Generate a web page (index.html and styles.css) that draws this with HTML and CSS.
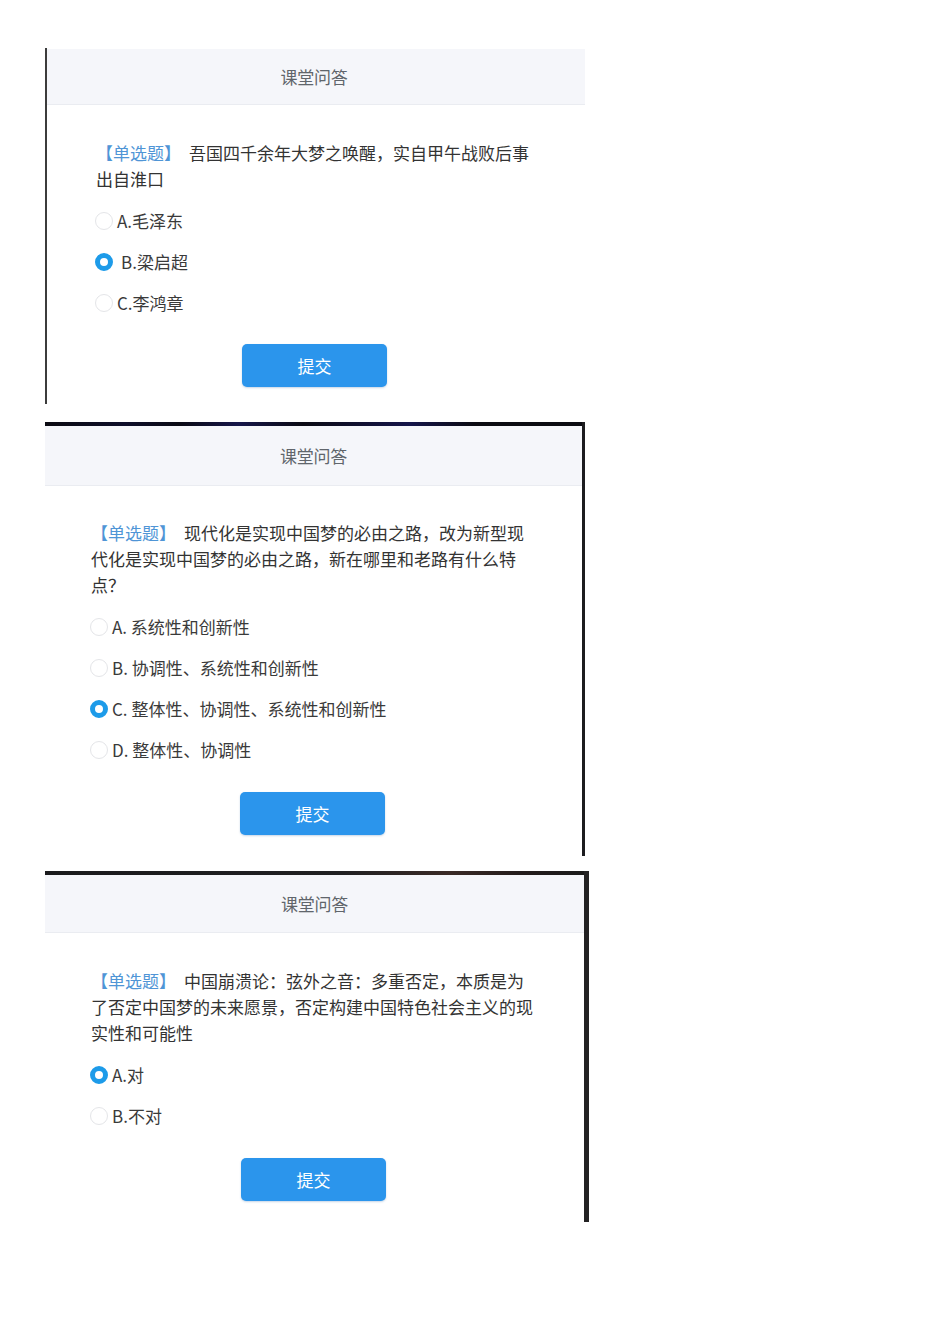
FILE: index.html
```html
<!DOCTYPE html>
<html lang="zh-CN">
<head>
<meta charset="utf-8">
<title>课堂问答</title>
<link rel="stylesheet" href="styles.css">
</head>
<body>
<div class="page">

  <section class="panel panel-first">
    <div class="header header-first">课堂问答</div>
    <div class="body body-first">
      <div class="question">
        <div class="q-line"><span class="tag">【单选题】</span><span class="q-text">吾国四千余年大梦之唤醒，实自甲午战败后事</span></div>
        <div class="q-line">出自淮口</div>
      </div>
      <ul class="options">
        <li class="option"><span class="radio"></span><span class="opt-text">A.毛泽东</span></li>
        <li class="option"><span class="radio checked"></span><span class="opt-text opt-wide">B.梁启超</span></li>
        <li class="option"><span class="radio"></span><span class="opt-text">C.李鸿章</span></li>
      </ul>
      <div class="actions"><button class="submit">提交</button></div>
    </div>
  </section>

  <section class="panel panel-second">
    <div class="topbar topbar-blue"></div>
    <div class="header header-second">课堂问答</div>
    <div class="body body-second">
      <div class="question">
        <div class="q-line"><span class="tag">【单选题】</span><span class="q-text">现代化是实现中国梦的必由之路，改为新型现</span></div>
        <div class="q-line">代化是实现中国梦的必由之路，新在哪里和老路有什么特</div>
        <div class="q-line">点？</div>
      </div>
      <ul class="options">
        <li class="option"><span class="radio"></span><span class="opt-text">A. 系统性和创新性</span></li>
        <li class="option"><span class="radio"></span><span class="opt-text">B. 协调性、系统性和创新性</span></li>
        <li class="option"><span class="radio checked"></span><span class="opt-text">C. 整体性、协调性、系统性和创新性</span></li>
        <li class="option"><span class="radio"></span><span class="opt-text">D. 整体性、协调性</span></li>
      </ul>
      <div class="actions"><button class="submit">提交</button></div>
    </div>
  </section>

  <section class="panel panel-third">
    <div class="topbar topbar-brown"></div>
    <div class="header header-third">课堂问答</div>
    <div class="body body-third">
      <div class="question">
        <div class="q-line"><span class="tag">【单选题】</span><span class="q-text">中国崩溃论：弦外之音：多重否定，本质是为</span></div>
        <div class="q-line">了否定中国梦的未来愿景，否定构建中国特色社会主义的现</div>
        <div class="q-line">实性和可能性</div>
      </div>
      <ul class="options">
        <li class="option"><span class="radio checked"></span><span class="opt-text">A.对</span></li>
        <li class="option"><span class="radio"></span><span class="opt-text">B.不对</span></li>
      </ul>
      <div class="actions"><button class="submit">提交</button></div>
    </div>
  </section>

</div>
</body>
</html>
```

FILE: styles.css
```css
* {
  box-sizing: border-box;
}

html, body {
  margin: 0;
  padding: 0;
  background: #ffffff;
}

body {
  font-family: "Noto Sans CJK SC", "Noto Sans", "Liberation Sans", sans-serif;
  color: #333333;
}

.page {
  padding-top: 48px;
  display: flex;
  flex-direction: column;
  align-items: flex-start;
}

.panel {
  margin-left: 45px;
  background: #ffffff;
  overflow: hidden;
}

.panel-first {
  width: 540px;
  height: 356px;
  border-left: 2px solid #3c3c3c;
}

.panel-second {
  width: 540px;
  margin-top: 18px;
  border-right: 3px solid #1c1c1f;
}

.panel-third {
  width: 544px;
  margin-top: 15px;
  border-right: 5px solid #232223;
}

.topbar {
  height: 4px;
}

.topbar-blue {
  background: linear-gradient(90deg, #0b0b12 0%, #0e0e2a 15%, #0a0a14 25%, #16164a 36%, #0b0b14 48%, #15154a 68%, #0b0b12 80%, #0b0b12 100%);
}

.topbar-brown {
  background: linear-gradient(90deg, #1a1a1c 0%, #202022 55%, #3a2a26 75%, #241c1c 88%, #1a1a1a 100%);
}

.header {
  display: flex;
  align-items: center;
  justify-content: center;
  background: #f5f6fa;
  border-bottom: 1px solid #eaecf1;
  font-size: 17px;
  color: #60656b;
  letter-spacing: -0.2px;
}

.header-first {
  height: 56px;
  margin-top: 1px;
  padding-right: 4px;
}

.header-second {
  height: 60px;
}

.header-third {
  height: 58px;
}

.body {
  padding-right: 48px;
}

.body-first {
  padding-left: 49px;
  padding-right: 52px;
  padding-top: 35px;
  padding-bottom: 17px;
}

.body-second {
  padding-left: 46px;
  padding-top: 34px;
  padding-bottom: 21px;
}

.body-third {
  padding-left: 46px;
  padding-top: 35px;
  padding-bottom: 21px;
}

.question {
  font-size: 17px;
  line-height: 26px;
  color: #333333;
}

.q-line {
  white-space: nowrap;
}

.tag {
  color: #4f95d6;
  margin-right: 8px;
}

.q-text {
  color: #333333;
}

.options {
  list-style: none;
  margin: 8px 0 0 0;
  padding: 0;
}

.option {
  display: flex;
  align-items: center;
  height: 41px;
  gap: 4px;
  font-size: 17px;
  color: #3a3a3a;
}

.radio {
  flex: none;
  width: 18px;
  height: 18px;
  border-radius: 50%;
  border: 1px solid #e4e5e8;
  background: #ffffff;
  margin-left: -1px;
}

.radio.checked {
  border: 5px solid #1d9be9;
  background: #ffffff;
}

.opt-wide {
  margin-left: 4px;
}

.actions {
  display: flex;
  justify-content: center;
  margin-top: 21px;
}

.body-second .actions,
.body-third .actions {
  margin-top: 22px;
}

.submit {
  width: 145px;
  height: 43px;
  border: none;
  border-radius: 5px;
  background: #2b95ec;
  color: #ffffff;
  font-family: "Noto Sans CJK SC", "Noto Sans", sans-serif;
  font-size: 17px;
  box-shadow: 0 1px 2px rgba(30, 90, 160, 0.25);
  padding: 0;
}
```
